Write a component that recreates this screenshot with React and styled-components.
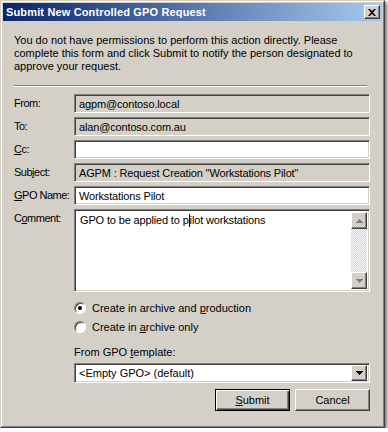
import React from "react";
import styled, { createGlobalStyle, css } from "styled-components";

const GlobalStyle = createGlobalStyle`
    body {
        margin: 0;
        background: #ffffff;
        font-family: "Liberation Sans", Arial, sans-serif;
        font-size: 11px;
        color: #000000;
    }
`;

const sunken = css`
    box-sizing: border-box;
    border: 1px solid;
    border-color: #808080 #ffffff #ffffff #808080;
    box-shadow: inset 1px 1px #404040, inset -1px -1px #d4d0c8;
`;

const raised = css`
    box-sizing: border-box;
    border: 1px solid;
    border-color: #ffffff #404040 #404040 #ffffff;
    box-shadow: inset -1px -1px #808080;
    background: #d4d0c8;
`;

const Window = styled.div`
    width: 385px;
    height: 428px;
    box-sizing: border-box;
    background: #d4d0c8;
    border: 1px solid;
    border-color: #d4d0c8 #404040 #404040 #d4d0c8;
    box-shadow: 2px 2px 3px rgba(0, 0, 0, 0.55);
    display: flex;
    flex-direction: column;
`;

const Frame = styled.div`
    flex: 1;
    border: 1px solid;
    border-color: #ffffff #808080 #808080 #ffffff;
    padding: 1px;
    display: flex;
    flex-direction: column;
`;

const TitleBar = styled.div`
    height: 18px;
    background: linear-gradient(to right, #0a246a, #a6caf0);
    display: flex;
    align-items: center;
    justify-content: space-between;
    padding: 0 2px;
`;

const Title = styled.span`
    color: #ffffff;
    font-weight: bold;
    font-size: 11px;
    letter-spacing: 0.15px;
    padding-left: 1px;
`;

const CloseButton = styled.div`
    ${raised};
    width: 16px;
    height: 14px;
    display: flex;
    align-items: center;
    justify-content: center;
`;

const Body = styled.div`
    padding: 13px 12px 0 11px;
`;

const Intro = styled.p`
    margin: 0;
    line-height: 13px;
    white-space: nowrap;
`;

const Separator = styled.div`
    margin: 12px 3px 0 0;
    border-top: 1px solid #808080;
    border-bottom: 1px solid #ffffff;
`;

const Form = styled.div`
    margin-top: 7px;
    display: flex;
    flex-direction: column;
    gap: 4px;
`;

const Row = styled.div`
    display: grid;
    grid-template-columns: 60px 1fr;
    align-items: start;
`;

const Label = styled.div`
    padding-top: 3px;
    line-height: 13px;
    letter-spacing: -0.5px;
    white-space: nowrap;
`;

const U = styled.span`
    text-decoration: underline;
`;

const Field = styled.div`
    ${sunken};
    height: 19px;
    padding: 0 4px;
    display: flex;
    align-items: center;
    background: ${(props) => (props.$readOnly ? "#d4d0c8" : "#ffffff")};
    white-space: nowrap;
    letter-spacing: -0.15px;
`;

const CommentBox = styled.div`
    ${sunken};
    height: 83px;
    background: #ffffff;
    display: flex;
    padding: 2px;
`;

const CommentText = styled.div`
    flex: 1;
    padding: 2px 3px;
    line-height: 13px;
    letter-spacing: -0.15px;
`;

const Caret = styled.span`
    display: inline-block;
    width: 1px;
    height: 13px;
    background: #000000;
    vertical-align: -3px;
`;

const ScrollBar = styled.div`
    width: 16px;
    display: flex;
    flex-direction: column;
    justify-content: space-between;
    background: repeating-conic-gradient(#ffffff 0 25%, #d4d0c8 0 50%) 0 0 / 2px 2px;
`;

const ArrowButton = styled.div`
    ${raised};
    width: 16px;
    height: ${(props) => props.$h || 16}px;
    display: flex;
    align-items: center;
    justify-content: center;
`;

const Options = styled.div`
    padding-left: 60px;
    margin-top: 6px;
    display: flex;
    flex-direction: column;
`;

const RadioRow = styled.div`
    height: 19px;
    display: flex;
    align-items: center;
    gap: 6px;
`;

const RadioCircle = styled.span`
    width: 12px;
    height: 12px;
    box-sizing: border-box;
    border-radius: 50%;
    border: 1px solid;
    border-color: #808080 #ffffff #ffffff #808080;
    box-shadow: inset 1px 1px #404040;
    background: #ffffff;
    display: flex;
    align-items: center;
    justify-content: center;

    &::after {
        content: "";
        width: 4px;
        height: 4px;
        border-radius: 50%;
        background: ${(props) => (props.$checked ? "#000000" : "transparent")};
    }
`;

const TemplateLabel = styled.div`
    margin-top: 10px;
    line-height: 13px;
`;

const Select = styled.div`
    ${sunken};
    margin-top: 4px;
    height: 20px;
    background: #ffffff;
    display: flex;
    align-items: center;
    padding: 2px;
`;

const SelectValue = styled.span`
    flex: 1;
    padding-left: 2px;
    white-space: nowrap;
`;

const Buttons = styled.div`
    display: flex;
    justify-content: flex-end;
    gap: 5px;
    margin-top: 6px;
`;

const Button = styled.div`
    ${raised};
    width: 75px;
    height: 22px;
    display: flex;
    align-items: center;
    justify-content: center;
    ${(props) =>
        props.$default &&
        css`
            border-color: #000000;
            box-shadow: inset 1px 1px #ffffff, inset -1px -1px #404040,
                inset -2px -2px #808080;
        `}
`;

const Arrow = ({ up, color = "#000" }) => (
    <svg width="7" height="4" viewBox="0 0 7 4">
        <path
            d={up ? "M3 0h1v1h1v1h1v1h1v1H0V3h1V2h1V1h1z" : "M0 0h7v1H6v1H5v1H4v1H3V3H2V2H1V1H0z"}
            fill={color}
        />
    </svg>
);

const App = () => {
    return (
        <>
            <GlobalStyle />
            <Window>
                <Frame>
                    <TitleBar>
                        <Title>Submit New Controlled GPO Request</Title>
                        <CloseButton>
                            <svg width="8" height="7" viewBox="0 0 8 7">
                                <path
                                    d="M0 0h2l2 2.2L6 0h2L5 3.5 8 7H6L4 4.8 2 7H0l3-3.5z"
                                    fill="#000"
                                />
                            </svg>
                        </CloseButton>
                    </TitleBar>
                    <Body>
                        <Intro>
                            You do not have permissions to perform this action directly. Please
                            <br />
                            complete this form and click Submit to notify the person designated to
                            <br />
                            approve your request.
                        </Intro>
                        <Separator />
                        <Form>
                            <Row>
                                <Label>From:</Label>
                                <Field $readOnly>agpm@contoso.local</Field>
                            </Row>
                            <Row>
                                <Label>To:</Label>
                                <Field $readOnly>alan@contoso.com.au</Field>
                            </Row>
                            <Row>
                                <Label>
                                    <U>C</U>c:
                                </Label>
                                <Field />
                            </Row>
                            <Row>
                                <Label>Subject:</Label>
                                <Field $readOnly>AGPM : Request Creation "Workstations Pilot"</Field>
                            </Row>
                            <Row>
                                <Label>
                                    <U>G</U>PO Name:
                                </Label>
                                <Field>Workstations Pilot</Field>
                            </Row>
                            <Row>
                                <Label>
                                    C<U>o</U>mment:
                                </Label>
                                <CommentBox>
                                    <CommentText>
                                        GPO to be applied to p<Caret />ilot workstations
                                    </CommentText>
                                    <ScrollBar>
                                        <ArrowButton $h={17}>
                                            <Arrow up color="#808080" />
                                        </ArrowButton>
                                        <ArrowButton $h={17}>
                                            <Arrow color="#808080" />
                                        </ArrowButton>
                                    </ScrollBar>
                                </CommentBox>
                            </Row>
                        </Form>
                        <Options>
                            <RadioRow>
                                <RadioCircle $checked />
                                <span>
                                    Create in archive and <U>p</U>roduction
                                </span>
                            </RadioRow>
                            <RadioRow>
                                <RadioCircle />
                                <span>
                                    Create in <U>a</U>rchive only
                                </span>
                            </RadioRow>
                            <TemplateLabel>
                                From GPO <U>t</U>emplate:
                            </TemplateLabel>
                            <Select>
                                <SelectValue>&lt;Empty GPO&gt; (default)</SelectValue>
                                <ArrowButton>
                                    <Arrow />
                                </ArrowButton>
                            </Select>
                            <Buttons>
                                <Button $default>
                                    <span>
                                        <U>S</U>ubmit
                                    </span>
                                </Button>
                                <Button>Cancel</Button>
                            </Buttons>
                        </Options>
                    </Body>
                </Frame>
            </Window>
        </>
    );
};

export default App;
